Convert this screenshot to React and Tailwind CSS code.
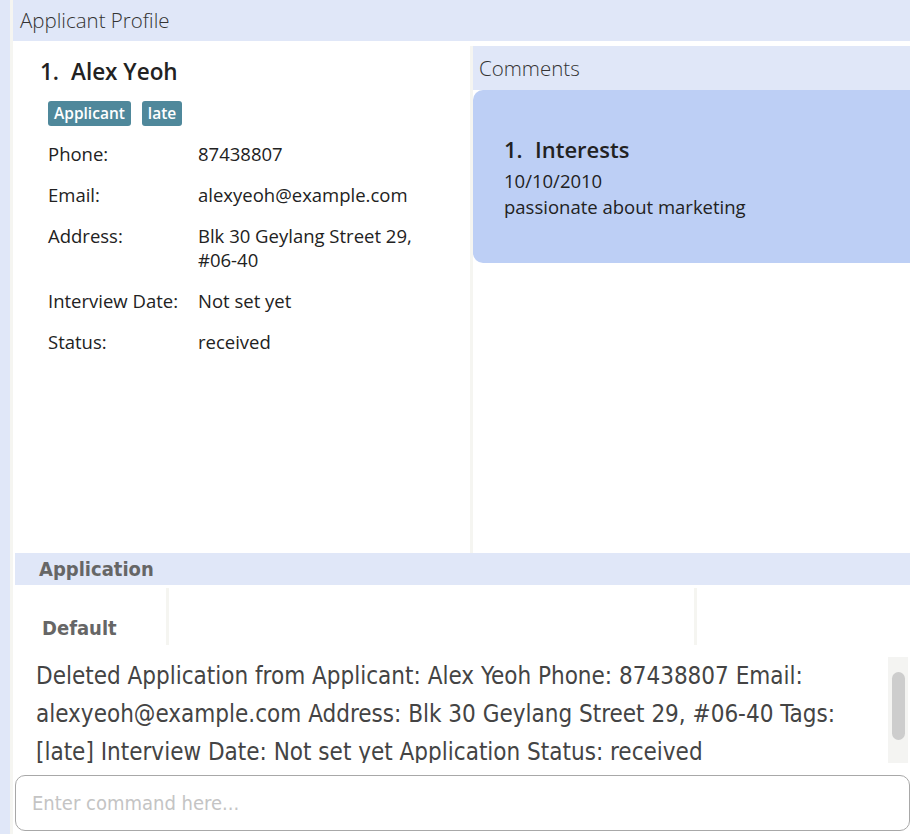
import { useState } from "react";

const profileRows = [
  { label: "Phone:", value: "87438807" },
  { label: "Email:", value: "alexyeoh@example.com" },
  { label: "Address:", value: "Blk 30 Geylang Street 29,\n#06-40" },
  { label: "Interview Date:", value: "Not set yet" },
  { label: "Status:", value: "received" },
];

function App() {
  const [command, setCommand] = useState("");

  return (
    <div className="flex h-[834px] w-[910px] overflow-hidden bg-white font-['Open_Sans','Noto_Sans',sans-serif] text-[#222]">
      {/* left strip */}
      <div className="w-[10px] shrink-0 bg-[#e0e7f8]" />
      <div className="w-[3px] shrink-0 bg-[#f5f5f1]" />

      <div className="flex min-w-0 flex-1 flex-col">
        {/* header */}
        <div className="flex h-[41px] shrink-0 items-center bg-[#e0e7f8] pl-[7px] text-[20.5px] font-light text-[#333]">
          Applicant Profile
        </div>

        <div className="flex h-[512px] shrink-0 pt-[5px]">
          {/* profile */}
          <div className="w-[457px] shrink-0 pl-[27px] pt-[11px]">
            <div className="flex h-[30px] items-center text-[22.5px] font-semibold text-[#222]">
              <span className="w-[31px]">1.</span>
              <span>Alex Yeoh</span>
            </div>
            <div className="mt-[14px] flex gap-[11px] pl-[8px]">
              <span className="flex h-[25px] items-center rounded-[3px] bg-[#4f889b] px-[6px] text-[15.5px] font-semibold text-white">Applicant</span>
              <span className="flex h-[25px] items-center rounded-[3px] bg-[#4f889b] px-[6px] text-[15.5px] font-semibold text-white">late</span>
            </div>
            <div className="mt-[16px] flex flex-col gap-[17px] pl-[8px] text-[18.5px] leading-[24px] text-[#222]">
              {profileRows.map((r) => (
                <div key={r.label} className="flex">
                  <span className="w-[150px] shrink-0">{r.label}</span>
                  <span className="whitespace-pre-line">{r.value}</span>
                </div>
              ))}
            </div>
          </div>

          <div className="w-[3px] shrink-0 bg-[#f5f5f1]" />

          {/* comments */}
          <div className="flex min-w-0 flex-1 flex-col">
            <div className="flex h-[44px] shrink-0 items-center bg-[#e0e7f8] pl-[6px] text-[20.5px] font-light text-[#333]">
              Comments
            </div>
            <div className="h-[173px] rounded-l-[10px] bg-[#bdcff5] pl-[31px] pt-[44px]">
              <div className="flex h-[30px] items-center text-[22px] font-semibold text-[#222]">
                <span className="w-[31px]">1.</span>
                <span>Interests</span>
              </div>
              <div className="mt-[4px] text-[18.5px] leading-[26px] text-[#222]">10/10/2010</div>
              <div className="text-[18.5px] leading-[26px] text-[#222]">passionate about marketing</div>
            </div>
          </div>
        </div>

        {/* application */}
        <div className="ml-[2px] flex h-[32px] shrink-0 items-center bg-[#e0e7f8] pl-[24px] font-['Liberation_Sans_Narrow','DejaVu_Sans_Condensed','Open_Sans',sans-serif] text-[20px] font-bold text-[#666]">
          Application
        </div>
        <div className="ml-[2px] flex h-[60px] shrink-0 pt-[3px]">
          <div className="flex w-[151px] items-end pb-[2px] pl-[27px] font-['Liberation_Sans_Narrow','DejaVu_Sans_Condensed','Open_Sans',sans-serif] text-[20px] font-bold text-[#666]">
            Default
          </div>
          <div className="w-[3px] bg-[#f5f5f1]" />
          <div className="w-[525px]" />
          <div className="w-[3px] bg-[#f5f5f1]" />
        </div>

        {/* result display */}
        <div className="mt-[12px] flex h-[106px] shrink-0 pl-[23px]">
          <div className="flex-1 overflow-hidden font-['Liberation_Sans_Narrow','DejaVu_Sans_Condensed','Open_Sans',sans-serif] text-[24px] leading-[38px] text-[#444]">
            Deleted Application from Applicant: Alex Yeoh Phone: 87438807 Email: alexyeoh@example.com Address: Blk 30 Geylang Street 29, #06-40 Tags: [late] Interview Date: Not set yet Application Status: received
          </div>
          <div className="mr-[2px] flex w-[20px] shrink-0 justify-center bg-[#f4f4f2] pt-[15px]">
            <div className="h-[68px] w-[13px] rounded-full bg-[#cdcdcd]" />
          </div>
        </div>

        {/* command box */}
        <div className="mt-[12px] pl-[2px]">
          <input
            value={command}
            onChange={(e) => setCommand(e.target.value)}
            placeholder="Enter command here..."
            className="h-[56px] w-full rounded-[10px] border border-[#a8a8a8] bg-white pl-[16px] font-['Liberation_Sans_Narrow','DejaVu_Sans_Condensed','Open_Sans',sans-serif] text-[20px] font-light outline-none placeholder:text-[#c4c4c4]"
          />
        </div>
      </div>
    </div>
  );
}

export default App;
